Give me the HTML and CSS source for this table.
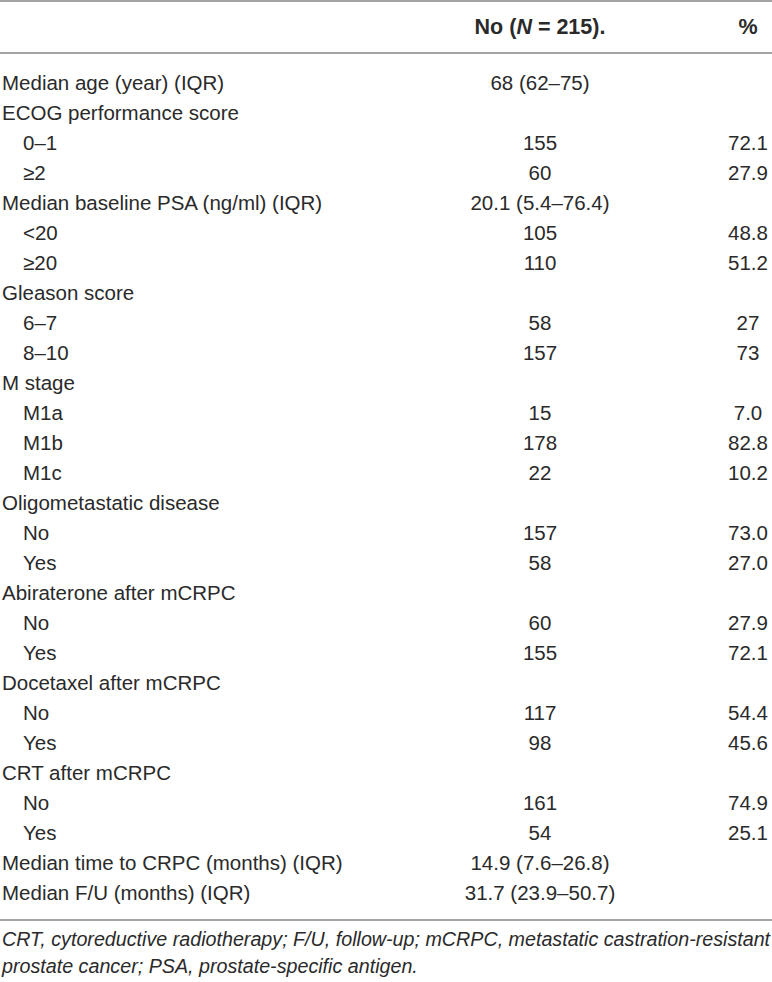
FILE: index.html
```html
<!DOCTYPE html>
<html lang="en">
  <head>
    <meta charset="UTF-8" />
    <meta name="viewport" content="width=device-width, initial-scale=1.0" />
    <title>Patient characteristics</title>
    <link rel="stylesheet" href="styles.css">
  </head>
  <body>
    <main class="table-wrap">
      <table class="data-table">
        <colgroup>
          <col class="col-label" />
          <col class="col-count" />
          <col class="col-pct" />
        </colgroup>
        <thead>
          <tr>
            <th></th>
            <th class="count">No (<i>N</i> = 215).</th>
            <th class="pct">%</th>
          </tr>
        </thead>
        <tbody>
          <tr class="first"><td>Median age (year) (IQR)</td><td class="count">68 (62–75)</td><td class="pct"></td></tr>
          <tr><td>ECOG performance score</td><td class="count"></td><td class="pct"></td></tr>
          <tr><td class="sub">0–1</td><td class="count">155</td><td class="pct">72.1</td></tr>
          <tr><td class="sub">≥2</td><td class="count">60</td><td class="pct">27.9</td></tr>
          <tr><td>Median baseline PSA (ng/ml) (IQR)</td><td class="count">20.1 (5.4–76.4)</td><td class="pct"></td></tr>
          <tr><td class="sub">&lt;20</td><td class="count">105</td><td class="pct">48.8</td></tr>
          <tr><td class="sub">≥20</td><td class="count">110</td><td class="pct">51.2</td></tr>
          <tr><td>Gleason score</td><td class="count"></td><td class="pct"></td></tr>
          <tr><td class="sub">6–7</td><td class="count">58</td><td class="pct">27</td></tr>
          <tr><td class="sub">8–10</td><td class="count">157</td><td class="pct">73</td></tr>
          <tr><td>M stage</td><td class="count"></td><td class="pct"></td></tr>
          <tr><td class="sub">M1a</td><td class="count">15</td><td class="pct">7.0</td></tr>
          <tr><td class="sub">M1b</td><td class="count">178</td><td class="pct">82.8</td></tr>
          <tr><td class="sub">M1c</td><td class="count">22</td><td class="pct">10.2</td></tr>
          <tr><td>Oligometastatic disease</td><td class="count"></td><td class="pct"></td></tr>
          <tr><td class="sub">No</td><td class="count">157</td><td class="pct">73.0</td></tr>
          <tr><td class="sub">Yes</td><td class="count">58</td><td class="pct">27.0</td></tr>
          <tr><td>Abiraterone after mCRPC</td><td class="count"></td><td class="pct"></td></tr>
          <tr><td class="sub">No</td><td class="count">60</td><td class="pct">27.9</td></tr>
          <tr><td class="sub">Yes</td><td class="count">155</td><td class="pct">72.1</td></tr>
          <tr><td>Docetaxel after mCRPC</td><td class="count"></td><td class="pct"></td></tr>
          <tr><td class="sub">No</td><td class="count">117</td><td class="pct">54.4</td></tr>
          <tr><td class="sub">Yes</td><td class="count">98</td><td class="pct">45.6</td></tr>
          <tr><td>CRT after mCRPC</td><td class="count"></td><td class="pct"></td></tr>
          <tr><td class="sub">No</td><td class="count">161</td><td class="pct">74.9</td></tr>
          <tr><td class="sub">Yes</td><td class="count">54</td><td class="pct">25.1</td></tr>
          <tr><td>Median time to CRPC (months) (IQR)</td><td class="count">14.9 (7.6–26.8)</td><td class="pct"></td></tr>
          <tr class="last"><td>Median F/U (months) (IQR)</td><td class="count">31.7 (23.9–50.7)</td><td class="pct"></td></tr>
        </tbody>
      </table>
      <p class="footnote">
        CRT, cytoreductive radiotherapy; F/U, follow-up; mCRPC, metastatic castration-resistant
        prostate cancer; PSA, prostate-specific antigen.
      </p>
    </main>
  </body>
</html>
```
FILE: styles.css
```css
/* Basic Reset */
* {
  box-sizing: border-box;
  margin: 0;
  padding: 0;
}

body {
  font-family: "Liberation Sans", Arial, sans-serif;
  color: #2a2a2a;
  background-color: #fff;
}

/* Table */
.data-table {
  width: 772px;
  border-collapse: collapse;
  table-layout: fixed;
  font-size: 20.5px;
}

.col-label {
  width: 440px;
}

.col-count {
  width: 200px;
}

.col-pct {
  width: 132px;
}

thead tr {
  border-top: 2px solid #a3a3a3;
  border-bottom: 2px solid #a3a3a3;
}

thead th {
  height: 52px;
  font-size: 21.5px;
  font-weight: bold;
  padding: 0;
}

thead th i {
  font-style: italic;
}

tbody td {
  height: 30px;
  line-height: 30px;
  padding: 0 0 0 2px;
  white-space: nowrap;
}

tbody tr.first td {
  height: 44px;
  padding-top: 14px;
}

tbody tr.last td {
  height: 41px;
  padding-bottom: 11px;
}

tbody tr.last {
  border-bottom: 2px solid #a3a3a3;
}

td.sub {
  padding-left: 23px;
}

.count {
  text-align: center;
}

td.count {
  padding-left: 0;
}

.pct {
  text-align: center;
  padding-left: 84px;
}

td.pct {
  padding-left: 84px;
}

/* Footnote */
.footnote {
  font-size: 19.7px;
  font-style: italic;
  line-height: 27px;
  padding: 5px 0 0 2px;
  width: 772px;
}
```
